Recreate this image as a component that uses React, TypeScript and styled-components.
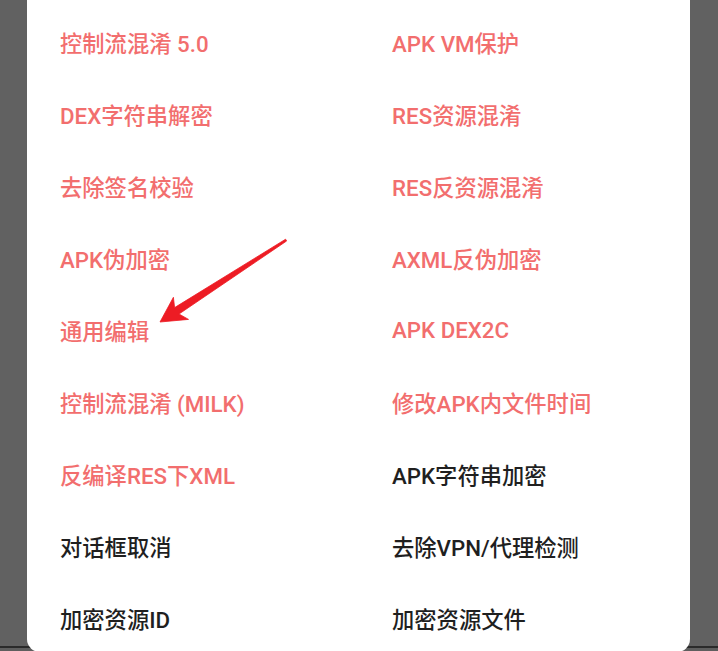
import React from "react";
import styled, { createGlobalStyle } from "styled-components";

const Global = createGlobalStyle`
  html, body {
    margin: 0;
    padding: 0;
    background: #616161;
  }
  #root {
    width: 718px;
    height: 651px;
    overflow: hidden;
  }
`;

const Screen = styled.div`
  position: relative;
  width: 718px;
  height: 651px;
  overflow: hidden;
  background: linear-gradient(
    to bottom,
    #616161 0,
    #616161 646px,
    #2a2a2a 646px,
    #2a2a2a 648px,
    #5e5e5e 648px
  );
  display: flex;
  align-items: flex-start;
  padding-left: 27px;
  box-sizing: border-box;
`;

const Dialog = styled.div`
  width: 663px;
  height: 652px;
  background: #ffffff;
  border-radius: 0 0 13px 13px;
  box-sizing: border-box;
  padding: 6px 0 0 33px;
  overflow: hidden;
`;

const OptionGrid = styled.div`
  display: grid;
  grid-template-columns: 332px 1fr;
  grid-auto-rows: 72px;
`;

const Option = styled.div<{ $active: boolean }>`
  display: flex;
  align-items: center;
  font-family: Roboto, "Noto Sans CJK SC", sans-serif;
  font-size: 22.3px;
  font-weight: 500;
  white-space: nowrap;
  color: ${(p) => (p.$active ? "#f26e6e" : "#1f1f1f")};
`;

const ArrowLayer = styled.svg`
  position: absolute;
  left: 0;
  top: 0;
  width: 718px;
  height: 651px;
  pointer-events: none;
`;

const rows: [string, boolean, string, boolean][] = [
  ["控制流混淆 5.0", true, "APK VM保护", true],
  ["DEX字符串解密", true, "RES资源混淆", true],
  ["去除签名校验", true, "RES反资源混淆", true],
  ["APK伪加密", true, "AXML反伪加密", true],
  ["通用编辑", true, "APK DEX2C", true],
  ["控制流混淆 (MILK)", true, "修改APK内文件时间", true],
  ["反编译RES下XML", true, "APK字符串加密", false],
  ["对话框取消", false, "去除VPN/代理检测", false],
  ["加密资源ID", false, "加密资源文件", false],
];

export default function App() {
  return (
    <>
      <Global />
      <Screen>
        <Dialog>
          <OptionGrid>
            {rows.map(([l, la, r, ra], i) => (
              <React.Fragment key={i}>
                <Option $active={la}>{l}</Option>
                <Option $active={ra}>{r}</Option>
              </React.Fragment>
            ))}
          </OptionGrid>
        </Dialog>
        <ArrowLayer viewBox="0 0 718 651">
          <polygon
            points="160,322 188.5,319.4 179,314 286.6,241 285.6,239.2 174.6,307.6 173.4,297.3"
            fill="#ed1c24"
            stroke="#ed1c24"
            strokeWidth="0.8"
            strokeLinejoin="round"
          />
        </ArrowLayer>
      </Screen>
    </>
  );
}
